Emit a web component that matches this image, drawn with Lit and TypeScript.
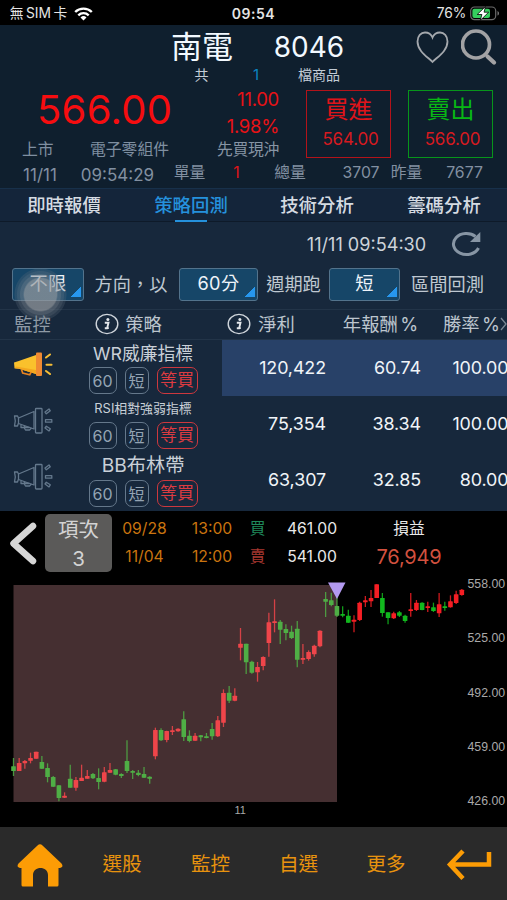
import { LitElement, html, svg, css } from "lit";
import { customElement } from "lit/decorators.js";

type Candle = [up: 0 | 1, high: number, top: number, bottom: number, low: number];

/* Candles in chart pixels multiplied by three, 0 = top edge of the chart. */
const CANDLES: Candle[] = [
  [0, 549, 574, 588, 603], [1, 549, 564, 588, 588], [1, 555, 558, 565, 581], [1, 533, 549, 557, 565],
  [1, 530, 530, 551, 551], [0, 543, 561, 581, 582], [0, 565, 579, 606, 622], [0, 603, 606, 635, 636],
  [0, 631, 631, 669, 679], [1, 652, 662, 668, 669], [0, 569, 611, 638, 638], [1, 606, 615, 638, 647],
  [1, 569, 608, 618, 618], [1, 585, 603, 611, 611], [0, 594, 597, 610, 612], [0, 580, 609, 621, 643],
  [1, 576, 592, 620, 622], [1, 564, 585, 593, 594], [0, 582, 583, 599, 601], [0, 595, 597, 603, 609],
  [0, 496, 558, 588, 594], [0, 585, 588, 592, 612], [0, 585, 593, 600, 604], [0, 576, 597, 608, 609],
  [0, 604, 605, 611, 626], [1, 458, 465, 544, 553], [0, 460, 465, 496, 498], [1, 467, 468, 495, 502],
  [1, 453, 466, 470, 480], [1, 460, 461, 469, 470], [0, 409, 433, 486, 498], [0, 466, 482, 498, 502],
  [1, 474, 482, 497, 498], [0, 480, 481, 487, 499], [0, 474, 484, 488, 490], [0, 444, 462, 484, 494],
  [1, 423, 436, 484, 486], [1, 343, 354, 443, 456], [0, 333, 353, 377, 384], [1, 340, 362, 377, 379],
  [1, 159, 206, 218, 256], [0, 206, 206, 262, 297], [0, 257, 260, 293, 296], [1, 261, 276, 292, 320],
  [1, 244, 246, 273, 286], [1, 113, 142, 204, 245], [1, 73, 139, 144, 172], [0, 135, 140, 164, 207],
  [0, 148, 162, 174, 196], [0, 152, 170, 189, 192], [0, 138, 161, 254, 277], [1, 207, 249, 254, 267],
  [1, 226, 231, 252, 257], [1, 209, 212, 238, 245], [1, 166, 167, 214, 217], [0, 51, 72, 80, 126],
  [0, 53, 76, 90, 94], [0, 65, 93, 122, 126], [0, 94, 117, 122, 127], [0, 104, 122, 143, 144],
  [1, 121, 134, 140, 172], [1, 80, 83, 135, 138], [1, 63, 76, 82, 96], [1, 45, 69, 79, 96],
  [1, 28, 28, 69, 69], [0, 54, 69, 114, 125], [0, 112, 112, 129, 148], [1, 110, 115, 130, 132],
  [0, 108, 112, 122, 126], [0, 119, 122, 138, 143], [1, 54, 103, 108, 125], [1, 75, 83, 105, 108],
  [0, 82, 83, 105, 106], [1, 80, 94, 99, 111], [0, 83, 97, 108, 111], [1, 54, 88, 115, 126],
  [0, 80, 94, 98, 107], [1, 61, 79, 97, 98], [1, 47, 58, 84, 87], [1, 42, 44, 60, 62],
];

const ROWS = [
  { name: "WR威廉指標", size: "mid", profit: "120,422", annual: "60.74", win: "100.00", on: true },
  { name: "RSI相對強弱指標", size: "small", profit: "75,354", annual: "38.34", win: "100.00", on: false },
  { name: "BB布林帶", size: "big", profit: "63,307", annual: "32.85", win: "80.00", on: false },
];

const AXIS: [string, number][] = [["558.00", 9], ["525.00", 63], ["492.00", 117.5], ["459.00", 172], ["426.00", 226]];

@customElement("app-root")
export class AppRoot extends LitElement {
  static styles = css`
    :host {
      display: flex; flex-direction: column; width: 507px; height: 900px; overflow: hidden;
      background: #000; color: #dfe6ee; position: relative;
      font-family: Inter, "Noto Sans CJK TC", sans-serif;
    }
    * { box-sizing: border-box; }
    svg { display: block; flex: none; }
    .row { display: grid; align-items: center; line-height: 1; }
    .row > * { display: flex; justify-content: center; align-items: center; white-space: nowrap; }
    .row > :nth-child(1) { grid-column: 2; }
    .row > :nth-child(2) { grid-column: 4; }
    .row > :nth-child(3) { grid-column: 6; }
    .row > :nth-child(4) { grid-column: 8; }
    .row > :nth-child(5) { grid-column: 10; }
    .row > :nth-child(6) { grid-column: 12; }
    .row > :nth-child(7) { grid-column: 14; }
    .row > :nth-child(8) { grid-column: 16; }

    .status { height: 25px; padding-top: 2px; grid-template-columns: 9px 59px 6px 19px 139px 43px 161px 31px 3px 29px; font-size: 13.8px; color: #e4e4e4; background: #000; }
    .status .clock { font-weight: 600; font-size: 14px; letter-spacing: .5px; }
    .status .carrier { gap: 2.5px; }

    .quote { height: 163px; background: #0f1f2e; }
    .title { height: 41px; grid-template-columns: 171px 62px 41px 70px 73px 32px 10px 41px; color: #f2f9ff; padding-top: 2px; }
    .title .name { font-size: 31px; }
    .title .code { font-size: 28px; }
    .count { height: 18px; grid-template-columns: 195px 13px 45px 6px 39px 42px; font-size: 14px; color: #c3ccd6; }
    .count > span { padding-bottom: 1px; }
    .count .n { color: #0a85c2; font-size: 15px; }
    .prices { display: grid; height: 73px; grid-template-columns: 216px 63px 27px 85px 17px 85px; padding-top: 6px; line-height: 1; }
    .last { color: #f60d10; font-size: 40px; padding: 1px 0 0 37px; height: 38px; display: flex; align-items: center; letter-spacing: .3px; }
    .change { color: #e81216; font-size: 18.5px; display: flex; flex-direction: column; align-items: flex-end; gap: 8px; letter-spacing: -.3px; }
    .info { display: grid; grid-template-columns: 22px 31px 37px 80px; height: 30px; margin-top: 7px; align-items: center; color: #7f8fa1; font-size: 15.8px; white-space: nowrap; }
    .info > :nth-child(1) { grid-column: 2; }
    .info > :nth-child(2) { grid-column: 4; }
    .dayt { color: #8795a5; font-size: 15.8px; white-space: nowrap; line-height: 16px; margin-top: -1px; }
    .box { height: 68px; border: 1px solid #b3131a; display: flex; flex-direction: column; align-items: center; padding-top: 7px; color: #e0141a; font-size: 24px; gap: 7px; grid-column: 4; }
    .box b { font-weight: 400; font-size: 17px; color: #d61a20; height: 20px; line-height: 20px; padding-left: 4px; letter-spacing: -.2px; }
    .box.sell { grid-column: 6; border-color: #07951b; color: #08b814; }
    .volume { height: 31px; grid-template-columns: 22px 36px 22px 75px 19px 31px 28px 7px 34px 32px 35px 40px 10px 31px 22px 41px; color: #8290a1; font-size: 15.8px; }
    .volume .low { padding-top: 5px; font-size: 17px; }
    .volume .one { color: #e0151a; }

    .tabs { height: 34px; border-top: 1px solid #17304a; grid-template-columns: 27px 74px 53px 74px 52px 74px 53px 74px; background: #14253a; font-size: 18.4px; font-weight: 500; color: #d5dbe2; border-bottom: 1px solid #0e1a29; }
    .tabs > span { height: 33px; padding-bottom: 1px; }
    .tabs .sel { color: #2591dc; background: linear-gradient(#2591dc, #2591dc) center bottom / 32px 2px no-repeat; }

    .body { background: #17283c; height: 289px; }
    .stamp { height: 44px; grid-template-columns: 306px 121px 24px 31px; font-size: 18.1px; color: #cdd3da; }
    .filters { height: 43px; padding-bottom: 7px; grid-template-columns: 12px 72px 10px 74px 11px 79px 8px 55px 8px 71px 10px 75px; font-size: 18.2px; color: #bfc8d1; }
    .pick { height: 33px; border: 1px solid #53738c; border-radius: 3px; color: #eef4fa; padding-bottom: 2px; letter-spacing: .4px;
      background: linear-gradient(135deg, transparent 50%, #2797ee 50%) right 2px bottom 3px / 10px 11px no-repeat, #164668; }
    .heads { height: 31px; padding-bottom: 1px; border-top: 1px solid #223448; border-bottom: 1px solid #223448; grid-template-columns: 14px 37px 44px 23px 7px 37px 48px 75px 25px 57px; font-size: 18.3px; color: #bcc5ce;
      grid-template-columns: 14px 37px 44px 23px 7px 37px 65px 23px 8px 37px 48px 75px 25px 57px 0px 7px; }
    .heads .dim { color: #8f9aa6; }
    .heads .pct { gap: 2.5px; }
    .line { display: grid; grid-template-columns: 64px 158px 285px; height: 56px; }
    .horn { padding: 9px 0 0 13px; }
    .strategy { display: flex; flex-direction: column; align-items: center; width: 158px; line-height: 1; color: #c9d0d8; white-space: nowrap; }
    .label { height: 27px; display: flex; align-items: center; }
    .mid { font-size: 17.8px; }
    .small { font-size: 12.9px; height: 26px; padding-top: 1px; }
    .big { font-size: 19.2px; height: 27px; }
    .tags { display: flex; gap: 8px; }
    .tag { height: 27px; border: 1.5px solid #65788b; border-radius: 7px; color: #94a4b3; display: flex; align-items: center; justify-content: center; font-size: 16px; width: 24px; }
    .tag.n { width: 28px; }
    .tag.wait { width: 41px; color: #dc3b41; border-color: #cd383e; font-size: 17px; }
    .big + .tags { padding-top: 1px; }
    .values { display: grid; grid-template-columns: 104px 95px 87.5px; align-items: center; justify-items: end; font-size: 17.9px; color: #f0f4f8; line-height: 1; height: 56px; letter-spacing: -.1px; }
    .values.hot { background: #284168; }

    .deal { height: 64px; display: grid; grid-template-columns: 45px 67px 395px; padding-top: 3px; background: #000; }
    .back { padding: 7px 0 0 9px; }
    .item { height: 58px; background: #5b5a59; border-radius: 5px; display: flex; flex-direction: column; align-items: center; justify-content: space-between; padding: 6px 0 3px; font-size: 20.5px; line-height: 1; color: #d3d3d3; }
    .trades { display: grid; grid-template-rows: 28px 28px; padding-top: 1px; }
    .trade { grid-template-columns: 11px 43px 26px 40px 18px 15px 22px 50px 39px 66px; font-size: 15.7px; color: #c9740f; }
    .trade .p { color: #e9e9e9; }
    .trade .buy { color: #1f8a5c; }
    .trade .sold { color: #a83830; }
    .trade .gain { color: #d2513f; font-size: 20px; letter-spacing: -.2px; }
    .chart { height: 252px; }
    .axis { font: 12.3px "Liberation Sans", sans-serif; fill: #a9a9a9; }
    .month { font-size: 11px; }

    .nav { height: 73px; background: #2a2a2a; grid-template-columns: 16px 47px 39px 40px 49px 39px 49px 39px 48px 40px 40px 46px; font-size: 19.6px; color: #e8930e; padding-top: 3px; }
    .touch { position: absolute; left: 14px; top: 268px; width: 53px; height: 53px; border-radius: 50%; background: radial-gradient(circle, rgba(150,155,160,.72) 0 16px, rgba(125,135,145,.5) 17.5px 20px, rgba(110,122,134,.38) 21px 23px, rgba(95,108,122,.26) 24px 25.5px, transparent 26.5px); }
  `;

  private infoIcon() {
    return html`<svg width="24" height="22" viewBox="0 0 24 22">
      <ellipse cx="12" cy="11" rx="10.8" ry="9.6" fill="none" stroke="#d0d6dc" stroke-width="1.4" />
      <circle cx="12.9" cy="6.5" r="1.5" fill="#e4e8ec" />
      <path d="M9.8 9.8h3.7l-1.3 5.3h1.6M9.8 15.3h3" fill="none" stroke="#e4e8ec" stroke-width="1.9" />
    </svg>`;
  }

  private horn(on: boolean) {
    if (on) {
      return html`<svg width="42" height="32" viewBox="0 0 42 32">
        <path d="M1 13.5l4-1.2L23 6v19L6 19.8l-4.5-.6z" fill="#fac12c" />
        <path d="M3 17.5l20 3.5v4L6 19.8l-4.5-.6z" fill="#f4a71f" />
        <path d="M8.5 20.5l1.2 3.6 7 1.7 1.5-3" fill="none" stroke="#e98420" stroke-width="1.7" />
        <rect x="23" y="3.5" width="6" height="23.5" rx="1" fill="#f08a32" />
        <path d="M33 8.5l4-3M33.5 15.8h5M33 22l4 3" stroke="#f6bd35" stroke-width="2.1" stroke-linecap="round" />
      </svg>`;
    }
    return html`<svg width="42" height="32" viewBox="0 0 42 32" fill="none" stroke="#64788c" stroke-width="1.3" stroke-linejoin="round">
      <path d="M1.5 11h3l1 2v5l-1 3h-3l.8-5z" />
      <path d="M5.500 13L21 6.500V24L5.500 18.500" />
      <path d="M8 19.500v3h3l1.500 2.500h4l2-2M11 20.500l1.500 2h4" />
      <rect x="22.500" y="3.500" width="6.500" height="24.500" rx=".8" />
      <path d="M32 7l4-3 1.300 1.800-4 3zM32.500 14.700h6.300v2.500h-6.300zM32 23l1.300-1.800 4 2.600L36 26z" />
    </svg>`;
  }

  private candle([up, high, top, bottom, low]: Candle, i: number) {
    const x = 13.5 + i * 5.675;
    const shaded = x < 337;
    const color = up ? (shaded ? "#ef454a" : "#f51e24") : shaded ? "#4fae45" : "#12b81e";
    return svg`<path d="M${x} ${high / 3}V${low / 3}" stroke=${color} stroke-width="1.3" opacity=".85" />
      <rect x=${x - 2.3} y=${top / 3} width="4.6" height=${Math.max(1.7, (bottom - top) / 3)} rx=".5" fill=${color} />`;
  }

  render() {
    return html`
      <div class="row status">
        <span class="carrier"><span>無</span><span>SIM</span><span>卡</span></span>
        <span><svg width="19" height="14" viewBox="0 0 19 14" fill="none" stroke="#fff" stroke-width="2.4">
          <path d="M1.2 5a11.8 11.8 0 0 1 16.6 0M4.3 8.3a7.4 7.4 0 0 1 10.4 0" /><path d="M9.5 13.5L6.5 10.5a4.3 4.3 0 0 1 6 0z" fill="#fff" stroke="none" />
        </svg></span>
        <span class="clock">09:54</span>
        <span>76%</span>
        <span><svg width="30" height="15" viewBox="0 0 30 15">
          <rect x=".7" y="1" width="25" height="12.6" rx="3.8" fill="none" stroke="#6b6b6b" stroke-width="1.2" />
          <path d="M27.5 5v4.6c2-.8 2-3.8 0-4.6z" fill="#777" />
          <rect x="2.4" y="2.7" width="17.6" height="9.2" rx="2" fill="#35cf5e" />
          <path d="M15.5.5L7.2 8.5h4.7L10.2 14.5l8.5-8.3h-4.6z" fill="#fff" stroke="#000" stroke-width=".8" />
        </svg></span>
      </div>

      <section class="quote">
        <div class="row title">
          <span class="name">南電</span><span class="code">8046</span>
          <span><svg width="34" height="34" viewBox="0 0 34 34"><path d="M16.500 32C12.500 27.500 1.500 21.500 1.500 11.500C1.500 6 5 2.500 9 2.500C12.500 2.500 15.300 4.500 16.500 7.500C17.700 4.500 20.500 2.500 24 2.500C28 2.500 31.500 6 31.500 11.500C31.500 21.500 20.500 27.500 16.500 32Z" fill="none" stroke="#a4a8ad" stroke-width="1.8" /></svg></span>
          <span><svg width="38" height="38" viewBox="0 0 38 38" fill="none" stroke="#a2a2a4"><circle cx="15" cy="16.500" r="13.500" stroke-width="3.700" /><path d="M26.500 28.500l6.500 6" stroke-width="4.300" stroke-linecap="round" /></svg></span>
        </div>
        <div class="row count"><span>共</span><span class="n">1</span><span>檔商品</span></div>
        <div class="prices">
          <div>
            <div class="last">566.00</div>
            <div class="info"><span>上市</span><span>電子零組件</span></div>
          </div>
          <div class="change"><span>11.00</span><span>1.98%</span><span class="dayt">先買現沖</span></div>
          <div class="box">買進<b>564.00</b></div>
          <div class="box sell">賣出<b>566.00</b></div>
        </div>
        <div class="row volume">
          <span class="low">11/11</span><span class="low">09:54:29</span><span>單量</span><span class="one">1</span>
          <span>總量</span><span>3707</span><span>昨量</span><span>7677</span>
        </div>
      </section>

      <nav class="row tabs"><span>即時報價</span><span class="sel">策略回測</span><span>技術分析</span><span>籌碼分析</span></nav>

      <section class="body">
        <div class="row stamp">
          <span>11/11 09:54:30</span>
          <span><svg width="32" height="28" viewBox="0 0 32 28">
            <path d="M24.500 6.500A13 10.500 0 1 0 27.500 18" fill="none" stroke="#8795a4" stroke-width="3" />
            <path d="M29.300 2v10H19z" fill="#8795a4" />
          </svg></span>
        </div>
        <div class="row filters">
          <span class="pick">不限</span><span>方向，以</span><span class="pick">60分</span><span>週期跑</span>
          <span class="pick">短</span><span>區間回測</span>
        </div>
        <div class="row heads">
          <span class="dim">監控</span><span>${this.infoIcon()}</span><span>策略</span><span>${this.infoIcon()}</span>
          <span>淨利</span><span class="pct"><span>年報酬</span><span>%</span></span><span class="pct"><span>勝率</span><span>%</span></span>
          <span><svg width="7" height="14" viewBox="0 0 7 14"><path d="M1 1l5 6-5 6" fill="none" stroke="#7b8794" stroke-width="1.300" /></svg></span>
        </div>
        ${ROWS.map((r) => html`<div class="line">
          <div class="horn">${this.horn(r.on)}</div>
          <div class="strategy">
            <div class="label ${r.size}">${r.name}</div>
            <div class="tags"><span class="tag n">60</span><span class="tag">短</span><span class="tag wait">等買</span></div>
          </div>
          <div class="values ${r.on ? "hot" : ""}"><span>${r.profit}</span><span>${r.annual}</span><span>${r.win}</span></div>
        </div>`)}
      </section>

      <section class="deal">
        <div class="back"><svg width="30" height="44" viewBox="0 0 30 44"><path d="M24 5L4.500 22.500L24 40" fill="none" stroke="#d6d6d6" stroke-width="6.500" stroke-linecap="round" stroke-linejoin="round" /></svg></div>
        <div class="item"><span>項次</span><span>3</span></div>
        <div class="trades">
          <div class="row trade"><span>09/28</span><span>13:00</span><span class="buy">買</span><span class="p">461.00</span><span class="p">損益</span></div>
          <div class="row trade"><span>11/04</span><span>12:00</span><span class="sold">賣</span><span class="p">541.00</span><span class="gain">76,949</span></div>
        </div>
      </section>

      <svg class="chart" width="507" height="252" viewBox="0 0 507 252">
        <rect x="13.500" y="10" width="323.500" height="217" fill="#452f31" />
        ${CANDLES.map((c, i) => this.candle(c, i))}
        <path d="M328 7.500h17.500L337 24z" fill="#b39af0" />
        ${AXIS.map(([t, y]) => svg`<text class="axis" x="467.500" y=${y + 4}>${t}</text>`)}
        <text class="axis month" x="234.500" y="239">11</text>
      </svg>

      <nav class="row nav">
        <span><svg width="48" height="44" viewBox="0 0 48 44"><path d="M21.500 2.500Q24 0 26.500 2.500L45.500 20.500Q48 24 44 25H42.500V42Q42.500 43.500 41 43.500H32V32C32 22.500 17 22.500 17 32V43.500H7Q5.500 43.500 5.500 42V25H4Q0 24 2.500 20.500Z" fill="#fc9c05" /></svg></span>
        <span>選股</span><span>監控</span><span>自選</span><span>更多</span>
        <span><svg width="46" height="32" viewBox="0 0 46 32"><path d="M43 3V15.500H4M17 2L4 15.500L17 29.500" fill="none" stroke="#fc9c05" stroke-width="4.500" /></svg></span>
      </nav>
      <div class="touch"></div>
    `;
  }
}
